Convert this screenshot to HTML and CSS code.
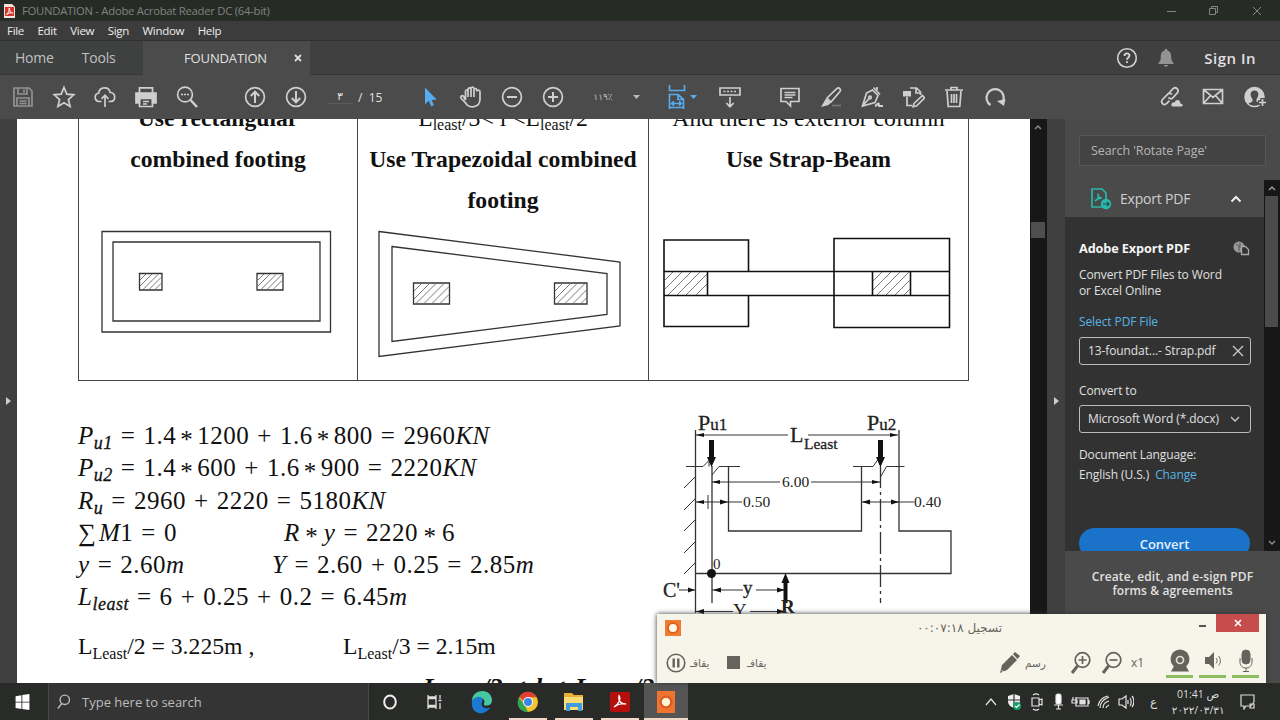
FILE: index.html
```
<!DOCTYPE html>
<html lang="en">

<head>
    <meta charset="UTF-8">
    <meta name="viewport" content="width=device-width, initial-scale=1.0">
    <title>FOUNDATION - Adobe Acrobat Reader DC (64-bit)</title>
    <link rel="stylesheet" href="styles.css">
</head>

<body>
    <header class="titlebar">
        <svg class="app-icon" width="11" height="14" viewBox="0 0 11 14"><path d="M0 0h8l3 3v11H0z" fill="#f3e4e2"/><path d="M1 3h9v9H1z" fill="#d8332b"/><path d="M2.500 10.500C5 8 5.500 6 5.200 4c0 3 1.500 4.500 3.500 5C6.500 8.500 4.500 9 2.500 10.500z" fill="none" stroke="#fff"/></svg>
        <span class="title-text">FOUNDATION - Adobe Acrobat Reader DC (64-bit)</span>
        <svg class="win-buttons" width="100" height="20" viewBox="1164 0 100 20" fill="none" stroke="#858984"><path d="M1167 10.500h9M1209.500 7.500h6v6h-6zM1211.500 7.500v-2h6v6h-2M1253 6l8 8M1261 6l-8 8"/></svg>
    </header>

    <nav class="menubar">
        <span>File</span><span>Edit</span><span>View</span><span>Sign</span><span>Window</span><span>Help</span>
    </nav>

    <div class="tabs">
        <div class="tab-links"><span class="tab-home">Home</span><span>Tools</span></div>
        <div class="tab-active"><span>FOUNDATION</span><svg width="8" height="8" viewBox="0 0 8 8" stroke="#ddd" stroke-width="1.800"><path d="M1 1l6 6M7 1l-6 6"/></svg></div>
        <div class="tab-right">
            <svg width="22" height="22" viewBox="0 0 22 22" fill="none" stroke="#d2d2d2" stroke-width="1.600"><circle cx="11" cy="11" r="9.300"/><path d="M8.500 9c0-3.500 5-3.300 5-.4 0 1.800-2.500 2-2.500 4.200M11 14.300v1.800" stroke-width="1.900"/></svg>
            <svg width="18" height="20" viewBox="0 0 18 20" fill="#929292"><path d="M9 1c1 0 1.500.6 1.500 1.500C13.500 3.300 14.200 6 14.200 9c0 3 .8 4.500 2.300 6v1h-15v-1c1.500-1.500 2.300-3 2.300-6 0-3 .7-5.700 3.700-6.500C7.500 1.600 8 1 9 1zM6.800 17h4.400c-.4 2.200-4 2.200-4.400 0z"/></svg>
            <span class="sign-in">Sign In</span>
        </div>
    </div>

    <div class="toolbar">
        <div class="tools tools-file">
            <svg class="icon dim" viewBox="0 0 24 24"><path d="M3 3h15l3 3v15H3zM7 3v6h9V3M6 21v-8h12v8M13 4.500v3M8.500 16h7M8.500 18.500h7"/></svg>
            <svg class="icon" viewBox="0 0 24 24"><path d="M12 2.500l2.800 6.700 7 .6-5.400 4.700 1.700 7L12 17.700l-6.100 3.800 1.700-7L2.200 9.800l7-.6z"/></svg>
            <svg class="icon" viewBox="0 0 24 24"><path d="M8.500 16.500H6A4.300 4.300 0 0 1 5.700 8C6.500 1.700 15.800 1 17.200 7.500c5.800.2 6 8.800.3 9h-2M12 22V10.500M8.500 13.800l3.500-3.600 3.500 3.600"/></svg>
            <svg class="icon" viewBox="0 0 24 24"><path d="M5.500 8V2.800h13V8"/><path d="M2 8h20v10h-3.500v-5h-13v5H2z" fill="#cfcfcf"/><path d="M5.500 13.500h13v8h-13zM9 16.500h6M9 19h4"/></svg>
            <svg class="icon" viewBox="0 0 24 24"><circle cx="10" cy="9.500" r="7.400"/><path d="M15.500 15l6.500 7" stroke-width="2.500"/><path d="M6 9.500h2M9 9.500h2M12 9.500h2"/></svg>
        </div>
        <div class="tools tools-page">
            <svg class="icon" viewBox="0 0 24 24"><circle cx="12" cy="12" r="9.400"/><path d="M12 18V7M7.800 11L12 6.700l4.200 4.300" stroke-width="2"/></svg>
            <svg class="icon" viewBox="0 0 24 24"><circle cx="12" cy="12" r="9.400"/><path d="M12 6v11M7.800 13l4.200 4.300 4.200-4.300" stroke-width="2"/></svg>
        </div>
        <span class="page-current">٣</span>
        <span class="page-total">/&nbsp; 15</span>
        <div class="tools tools-view">
            <svg class="icon" viewBox="0 0 24 24"><path d="M7 2.500v16.800l3.800-3.600 2.300 5.600 2.800-1.100-2.300-5.500h5.200z" fill="#55acee" stroke="none"/></svg>
            <svg class="icon" viewBox="0 0 24 24"><path d="M6.500 15V6.500c0-2 2.500-2 2.500 0V12 4.500c0-2.300 3-2.300 3 0V12 3.700c0-2.200 3-2.200 3 0V12 5c0-2 2.700-2 2.700 0v1.500c0-1.800 3.300-1.800 3.300.3V14c0 9.500-11.500 9.500-14 4.500L2 13c-1-2 1.200-3 2.600-1.700z"/></svg>
            <svg class="icon" viewBox="0 0 24 24"><circle cx="12" cy="12" r="9.400"/><path d="M7 12h10" stroke-width="2"/></svg>
            <svg class="icon" viewBox="0 0 24 24"><circle cx="12" cy="12" r="9.400"/><path d="M7 12h10M12 7v10" stroke-width="2"/></svg>
        </div>
        <span class="zoom-value">١١٩٪</span>
        <svg class="caret" viewBox="0 0 7 4"><path d="M0 0h7L3.500 4z" fill="#bbb"/></svg>
        <svg class="icon fit-icon" viewBox="0 0 24 24"><path d="M4.500 0v5.500h15V0M4.500 24V9.500H13l5.500 5V24M13 9.500v5h5.500M4.500 22.500h14M7 18.500h9M9 16.300l-2.300 2.200L9 20.700M14 16.300l2.300 2.200-2.300 2.200" stroke="#55acee"/></svg>
        <svg class="caret caret-blue" viewBox="0 0 7 4"><path d="M0 0h7L3.500 4z" fill="#55acee"/></svg>
        <svg class="icon ruler-icon" viewBox="0 0 24 24"><path d="M2 3h20v7H2zM5.500 6.500h2M9 6.500h2M12.500 6.500h2M16 6.500h2M12 12v9.500M8.300 18l3.700 3.700 3.700-3.700"/></svg>
        <div class="tools tools-edit">
            <svg class="icon" viewBox="0 0 24 24"><path d="M3 3.500h18v13h-8.500V21l-4.500-4.500H3zM6.500 7.500h11M6.500 10h11M6.500 12.500h8"/></svg>
            <svg class="icon" viewBox="0 0 24 24"><path d="M8 13L18 3.500c2-1.500 4.500.8 3 3L12 17z"/><path d="M7 13.500l5 4-2.500 2.500L2 22z" fill="#cfcfcf" stroke="none"/><path d="M13 20.500h9" stroke="#777"/></svg>
            <svg class="icon" viewBox="0 0 24 24"><path d="M13.500 2.500l6.500 7M12.500 5l-6 3L2.500 21 15 17.500l3-7zM2.500 21l7-8M17 2v3"/><circle cx="10" cy="12.500" r="1.300"/><path d="M15 21c1.500-.5 2-2.500 3.500-2.500L19 21h4" stroke-width="2.200"/></svg>
            <svg class="icon" viewBox="0 0 24 24"><path d="M9 3h6.500l4 4v3M15 3v5h4M6 12v8.500h5M13 18.500l8.500-8 2 2.500-8 8-3.500.6z"/><path d="M2 6h8v5.500H2z" fill="#cfcfcf" stroke="none"/></svg>
            <svg class="icon" viewBox="0 0 24 24"><path d="M3 5h18M9 5V2.500h6V5M5 6l1.200 15.500h11.600L19 6M9.500 9v9M12 9v9M14.500 9v9"/></svg>
            <svg class="icon" viewBox="0 0 24 24"><path d="M7.500 20A8.600 8.600 0 1 1 20.300 15.500" stroke-width="2.200"/><path d="M14 16l8.500-2-1.500 7z" fill="#cfcfcf" stroke="none"/></svg>
        </div>
        <div class="tools tools-share">
            <svg class="icon" viewBox="0 0 24 24"><path d="M10 8l4-4.300c3-2.500 6.500 1 4.500 4l-4.700 5.100c-1.500 1.500-3.500 1-4.300-.4M13 9.500c-1.500-1.700-3.500-1.200-4.500-.2l-5 5.200c-2.500 3 1.300 6.500 4 4.200l3-3"/><path d="M13 21.500c-2-3 1-5 2.800-4 1-4 6-2.500 5.500 1 3 0 3 3 .7 3z" fill="#cfcfcf" stroke="none"/></svg>
            <svg class="icon" viewBox="0 0 24 24"><path d="M2.500 4.500h19v14h-19zM2.500 4.500l9.500 8 9.500-8M2.500 18.500l7-8M21.500 18.500l-7-8"/></svg>
            <svg class="icon" viewBox="0 0 24 24"><circle cx="11.500" cy="12" r="9.400" fill="#cfcfcf"/><path d="M11.500 5.500c5 0 4.500 6 2 8.500v2.500l4 2c-3 3-9 3-12 0l4-2V14c-2.500-2.500-3-8.500 2-8.500z" fill="#4a4a4a" stroke="none"/><path d="M19.500 13v9M15 17.500h9" stroke="#4a4a4a" stroke-width="4.500"/><path d="M19.500 14v7M16 17.500h7"/></svg>
        </div>
    </div>

    <main class="workspace">
        <aside class="left-rail"><span class="arrow-right"></span></aside>

        <article class="page">
            <div class="footing-table">
                <section class="cell">
                    <h3>Use rectangular<br>combined footing</h3>
                    <svg width="279" height="160" viewBox="79 220 279 160" class="drawing">
                        <path d="M102 231.500h228.500v100.500H102zM113 242h207v79H113z"/>
                        <path d="M139.500 273.500h22.500v16.500h-22.500zM257 273.500h26v16.500h-26z"/>
                        <path class="hatch" d="M140 280l6-6M140 286l12-12M143 289.500l15-15M149 289.500l12-12M155 289.500l6-6M258 280l6-6M258 286l12-12M261 289.500l15-15M267 289.500l15-15M273 289.500l9-9"/>
                    </svg>
                </section>
                <section class="cell">
                    <h3><span class="plain">L<sub>least</sub>/3&lt; l &lt;L<sub>least</sub>/2</span><br>Use Trapezoidal combined<br>footing</h3>
                    <svg width="289" height="160" viewBox="358 220 289 160" class="drawing">
                        <path d="M379 231.500L620 262v64L379 356.500zM392 246.500L607 273.500v41L392 341.500z"/>
                        <path d="M413.500 283h36v21h-36zM554.500 283h32.500v21h-32.500z"/>
                        <path class="hatch" d="M414 291l7-7M414 299l15-15M416 303.500l20-20M424 303.500l20-20M432 303.500l17-17M440 303.500l9-9M555 291l7-7M555 299l15-15M557 303.500l20-20M565 303.500l20-20M573 303.500l14-14M581 303.500l6-6"/>
                    </svg>
                </section>
                <section class="cell">
                    <h3><span class="plain">And there is exterior column</span><br>Use Strap-Beam</h3>
                    <svg width="319" height="160" viewBox="649 220 319 160" class="drawing heavy">
                        <path d="M748.500 271.500v-31.500H664v86.500h84.500v-30.500M664 271.500h285.500M664 295.500h285.500M834 238.500h115.500v89H834zM707.500 271.500v24M872.500 271.500v24M910.500 271.500v24"/>
                        <path class="hatch" d="M665 280l8-8M665 289l17-17M668 295l23-23M677 295l23-23M686 295l21-21M696 295l11-11M873 281l9-9M873 290l18-18M877 295l23-23M886 295l23-23M895 295l15-15M904 295l6-6"/>
                    </svg>
                </section>
            </div>

            <div class="solution">
                <div class="equations">
                    <p><i>P<sub>u1</sub></i> = 1.4<b class="op">*</b>1200 + 1.6<b class="op">*</b>800 = 2960<i>KN</i></p>
                    <p><i>P<sub>u2</sub></i> = 1.4<b class="op">*</b>600 + 1.6<b class="op">*</b>900 = 2220<i>KN</i></p>
                    <p><i>R<sub>u</sub></i> = 2960 + 2220 = 5180<i>KN</i></p>
                    <p class="pair moment"><span>∑<i>&#8202;M</i>1 = 0</span><span><i>R</i><b class="op">*</b><i>y</i> = 2220<b class="op">*</b>6</span></p>
                    <p class="pair arm"><span><i>y</i> = 2.60<i>m</i></span><span><i>Y</i> = 2.60 + 0.25 = 2.85<i>m</i></span></p>
                    <p><i>L<sub>least</sub></i> = 6 + 0.25 + 0.2 = 6.45<i>m</i></p>
                    <p class="pair least"><span>L<sub>Least</sub>/2 = 3.225m ,</span><span>L<sub>Least</sub>/3 = 2.15m</span></p>
                    <p class="range">L<sub>Least</sub>/3 &lt; l &lt; L<sub>Least</sub>/2</p>
                </div>

                <svg class="drawing beam" width="330" height="290" viewBox="650 400 330 290">
                    <path d="M695.500 430v183M712 466v137M728.500 466v65H861.500V466M899 430v101h52v42.500H695.500"/>
                    <path class="thin" d="M686 466.500h17l6-6v6M712 475l7-8.500h21M853 466.500h20l5-7 2 6M880.500 477l6-10.500h18M695 477l-11 11M695 499l-11 11M695 520l-11 11M695 542l-11 11M695 563l-11 11M708 495v14"/>
                    <path class="thin" d="M696 435h92M808 435h90M712 482h68M811 482h69M696 502h46M861 502h53M679 590h16M712 590h31M756 590h30M696 611.500h37M750 611.500h35"/>
                    <path d="M880.500 466v137" stroke-dasharray="22 4 3 4"/>
                    <path class="solid" d="M696 435l8-2v4zM898 435l-8-2v4zM712 482l8-2v4zM880 482l-8-2v4zM728 502l-8-2.500v5zM696 502l8-2v4zM862 502l8-2.500v5zM899 502l-8-2.500v5zM695 590l-7-2.500v5zM713 590l8-2.500v5zM785 590l-8-2.500v5zM696 611.500l8-2.500v5zM785 611.500l-8-2.500v5z"/>
                    <path class="solid" d="M709 440h5v17h2l-4.500 10-4.500-10h2zM878 440h5v17h2l-4.500 10-4.500-10h2zM783.500 603v-20h-2l4-10 4 10h-2v20z"/>
                    <circle class="solid" cx="711.500" cy="573.500" r="4.500"/>
                    <text class="load" x="698" y="430" font-size="22">P<tspan font-size="17">u1</tspan></text>
                    <text class="load" x="867" y="430" font-size="22">P<tspan font-size="17">u2</tspan></text>
                    <text class="load" x="790" y="442" font-size="22">L</text>
                    <text class="load" x="804" y="448.500" font-size="15.500">Least</text>
                    <text x="782" y="487" font-size="15.500">6.00</text>
                    <text x="743" y="507" font-size="15.500">0.50</text>
                    <text x="914" y="507" font-size="15.500">0.40</text>
                    <text x="713" y="569" font-size="15">0</text>
                    <text class="load" x="663" y="597" font-size="20">C'</text>
                    <text class="load" x="743" y="594" font-size="19">y</text>
                    <text x="733" y="617" font-size="19">Y</text>
                    <text x="781" y="613" font-size="19" font-weight="bold">R</text>
                </svg>
            </div>
        </article>

        <div class="scroll-track">
            <svg width="16" height="16" viewBox="0 0 16 16" fill="none" stroke="#888" stroke-width="1.500"><path d="M5 10l3-3 3 3"/></svg>
            <div class="thumb"></div>
        </div>
        <div class="right-rail"><span class="arrow-right"></span></div>

        <aside class="panel">
            <div class="search">Search 'Rotate Page'</div>
            <div class="panel-body">
                <div class="panel-main">
                    <div class="export-head">
                        <svg width="24" height="24" viewBox="0 0 24 24" fill="none" stroke="#27b8ab" stroke-width="1.700"><path d="M14 20H3V2h10l4 4v6M6 14c3-2 4-5 3-7 0 3 2 4 4 4-3 0-5 1-7 3z"/><circle cx="17" cy="17" r="5.200" fill="#27b8ab" stroke="none"/><path d="M14 17h6M18 15l2 2-2 2" stroke="#254b49" stroke-width="1.200"/></svg>
                        <span>Export PDF</span>
                        <svg width="12" height="8" viewBox="0 0 12 8" fill="none" stroke="#eee" stroke-width="2"><path d="M1.500 6.500L6 2l4.500 4.500"/></svg>
                    </div>
                    <div class="export-form">
                        <div class="form-title"><b>Adobe Export PDF</b>
                            <svg width="17" height="15" viewBox="0 0 17 15"><circle cx="6" cy="6" r="5.500" fill="#999"/><path d="M3 3l3 2v5M7 2v5" stroke="#555" fill="none"/><path d="M8.500 5.500h4l3 3v5h-7z" fill="#333" stroke="#aaa" stroke-width="1.300"/></svg>
                        </div>
                        <p>Convert PDF Files to Word<br>or Excel Online</p>
                        <a class="select-file">Select PDF File</a>
                        <div class="field file"><span>13-foundat...- Strap.pdf</span><svg width="12" height="12" viewBox="0 0 12 12" stroke="#ccc" stroke-width="1.300"><path d="M1 1l10 10M11 1L1 11"/></svg></div>
                        <label>Convert to</label>
                        <div class="field format"><span>Microsoft Word (*.docx)</span><svg width="10" height="7" viewBox="0 0 10 7" fill="none" stroke="#ccc" stroke-width="1.300"><path d="M1 1l4 4 4-4"/></svg></div>
                        <p class="language">Document Language:<br>English (U.S.) &nbsp;<a>Change</a></p>
                        <button class="convert">Convert</button>
                    </div>
                </div>
                <div class="panel-scroll">
                    <svg width="16" height="16" viewBox="0 0 16 16" fill="none" stroke="#999" stroke-width="1.500"><path d="M5 10l3-3 3 3"/></svg>
                    <div class="panel-thumb"></div>
                    <svg width="16" height="16" viewBox="0 0 16 16" fill="none" stroke="#888" stroke-width="1.500"><path d="M5 6l3 3 3-3"/></svg>
                </div>
            </div>
            <div class="panel-foot">Create, edit, and e-sign PDF<br>forms &amp; agreements</div>
        </aside>
    </main>

    <!-- screen recorder floats above the reader -->
    <section class="recorder">
        <div class="rec-head">
            <svg width="16" height="16" viewBox="0 0 16 16"><path d="M0 0h16v16H0z" fill="#ee7d34"/><circle cx="8" cy="8" r="6" fill="#e35d1c"/><circle cx="8" cy="8" r="4" fill="#fff8e8"/></svg>
            <span class="rec-title" dir="rtl">تسجيل ٠٠:٠٧:١٨</span>
            <span class="rec-min"></span>
            <span class="rec-close"><svg width="8" height="8" viewBox="0 0 8 8" stroke="#fff" stroke-width="1.600"><path d="M1 1l6 6M7 1L1 7"/></svg></span>
        </div>
        <div class="rec-tools">
            <svg width="20" height="20" viewBox="0 0 20 20" fill="none" stroke="#66635d"><circle cx="10" cy="10" r="8.800" stroke-width="1.600"/><path d="M7.700 5.500v9M12.300 5.500v9" stroke-width="2.400"/></svg>
            <span class="rec-label pause">يقافـ</span>
            <span class="stop"></span>
            <span class="rec-label">يقافـ</span>
            <svg class="pencil" width="22" height="22" viewBox="0 0 22 22" fill="#66635d"><path d="M1 21l2-8L13 3l5 5L8 18zM14 2l2-2 5 4-2.500 3z"/><path d="M2.500 18.500l2.500 1.500" stroke="#f7f3e9"/></svg>
            <span class="rec-label draw">رسم</span>
            <svg class="zoom-in" width="21" height="24" viewBox="0 0 21 24" fill="none" stroke="#66635d" stroke-width="1.700"><circle cx="12.500" cy="9" r="7.300"/><path d="M7.500 15L2 22" stroke-width="3"/><path d="M8.500 9h8M12.500 5v8"/></svg>
            <svg class="zoom-out" width="21" height="24" viewBox="0 0 21 24" fill="none" stroke="#66635d" stroke-width="1.700"><circle cx="12.500" cy="9" r="7.300"/><path d="M7.500 15L2 22" stroke-width="3"/><path d="M8.500 9h8"/></svg>
            <span class="factor">x1</span>
            <div class="devices">
                <span><svg width="22" height="24" viewBox="0 0 22 24" fill="#66635d"><circle cx="11" cy="10" r="9.500"/><path d="M5 17h12l3 5.500H2z"/><circle cx="11" cy="11" r="3.500" fill="none" stroke="#e5e0d5" stroke-width="1.700"/></svg></span>
                <span><svg width="22" height="24" viewBox="0 0 22 24" fill="#66635d"><path d="M3 8h4l5-5v17l-5-5H3z"/><path d="M14 9c1.500 1.500 1.500 4 0 5.500M16.500 7c2.500 2.500 2.500 7 0 9.500" fill="none" stroke="#66635d"/></svg></span>
                <span><svg width="22" height="24" viewBox="0 0 22 24" fill="none" stroke="#66635d"><rect x="7" y="1" width="8" height="14" rx="4" fill="#66635d"/><path d="M5 9v4c0 8 12 8 12 0V9M11 19v4M8 22.500h6"/></svg></span>
            </div>
        </div>
    </section>

    <footer class="taskbar">
        <svg class="start" width="15" height="16" viewBox="0 0 13 15" fill="#fff"><path d="M0 2l5.500-.8v6H0zM6.300 1L13 0v7.200H6.300zM0 8h5.500v6L0 13.200zM6.300 8H13v7l-6.700-1z"/></svg>
        <div class="task-search">
            <svg width="13" height="16" viewBox="0 0 13 16" fill="none" stroke="#bbb" stroke-width="1.400"><circle cx="7.800" cy="5.800" r="4.700"/><path d="M4.800 9.500L.8 14.500"/></svg>
            <span>Type here to search</span>
        </div>
        <div class="apps">
            <span><svg width="24" height="24" viewBox="0 0 24 24" fill="none" stroke="#eee" stroke-width="2"><ellipse cx="12" cy="12" rx="5.800" ry="6.500"/></svg></span>
            <span><svg width="24" height="24" viewBox="0 0 24 24" fill="none" stroke="#ddd" stroke-width="1.300"><path d="M4 8.500h8v7H4zM4 5v2h8V5M4 19v-2h8v2M16 5v4M16 13v6M14.500 10.500h3"/></svg></span>
            <span><svg width="24" height="24" viewBox="0 0 24 24"><path d="M2 11C2 3 10-1 17 2c6 3 7 12 1 13.500-4 .5-5-1-3.500-3.500C15 8 7 5 2 11z" fill="#45c8a0"/><path d="M2 11c5-7 12-4 10.500 0-3 5 2 9 8 6.500C13 28 0 23 2 11z" fill="#1b79d1"/></svg></span>
            <span class="open"><svg width="24" height="24" viewBox="0 0 24 24"><circle cx="12" cy="12" r="10" fill="#f4c430"/><path d="M3 7.500l5.500 7L12 22C3 22-.5 14 3 7.500z" fill="#36a351"/><path d="M3.500 7C7 0 17 0 20.500 7.300H12l-4.500 4z" fill="#e23e31"/><circle cx="12" cy="12" r="5" fill="#fff"/><circle cx="12" cy="12" r="4" fill="#3d84ea"/></svg></span>
            <span class="open"><svg width="24" height="24" viewBox="0 0 24 24"><path d="M2 3h8l2 2h9v15H2z" fill="#e8ae35"/><path d="M2 7h19v13H2z" fill="#fbdb76"/><path d="M4 13h16v8h-4v-4H8v4H4z" fill="#3f9ddb"/></svg></span>
            <span class="open"><svg width="24" height="24" viewBox="0 0 24 24"><rect x="2" y="2" width="20" height="20" rx="2" fill="#b40f0b"/><path d="M6 17c5-3 7-8 5-11-1 6 3 8 7 8-4-1-8 0-12 3z" fill="none" stroke="#fff" stroke-width="1.400"/></svg></span>
            <span class="open current"><svg width="24" height="24" viewBox="0 0 24 24"><path d="M3 1h18v22H3z" fill="#ee7430"/><circle cx="12" cy="12" r="6.500" fill="#db5a20"/><circle cx="12" cy="12" r="4.200" fill="#fff3d8"/></svg></span>
        </div>
        <svg class="tray" width="150" height="24" viewBox="984 690 150 24" fill="none" stroke="#e4e4e4" stroke-width="1.200">
            <path d="M986 705l5-6 5 6"/>
            <path d="M1014 694l6 2v5c0 4-3 6-6 7-3-1-6-3-6-7v-5z" fill="#eee" stroke="none"/><path d="M1014 694v14M1008 700h12" stroke="#333"/><circle cx="1017" cy="706" r="4" fill="#159c6c" stroke="none"/><path d="M1015 706l1.500 1.500 3-3" stroke="#fff"/>
            <path d="M1032 698h7v8h-7zM1039 700l3-1v6l-3-1M1033 695c2-1.500 4-1.500 6 0M1033 709c2 1.500 4 1.500 6 0"/>
            <rect x="1056" y="694" width="5" height="10" rx="2" fill="#fff"/><path d="M1054 705h9M1058.500 705v4M1056 709h5"/>
            <path d="M1076 698h12v8h-12zM1089 700v4M1073 697v3M1076 697v3M1072 700h5v3h-5z"/><path d="M1080 700h5v4h-5z" fill="#ddd"/>
            <path d="M1100 708c0-5 4-9 9-11M1103 708c0-3 2-6 6-7M1106 708c0-1 1-2 3-3M1098 706c1-5 5-9 10-10"/>
            <path d="M1119 699h3l4-3v12l-4-3h-3zM1128 700v4M1130 698c1.500 2 1.500 6 0 8M1132 696c2.500 3 2.500 8 0 11"/>
        </svg>
        <span class="lang">ع</span>
        <div class="clock"><span dir="rtl">ص 01:41</span><span>٢٠٢٢/٠٣/٣١</span></div>
        <svg class="notice" width="16" height="16" viewBox="0 0 16 16" fill="none" stroke="#ddd" stroke-width="1.200"><path d="M9 12H6l-2 3v-3H1V1h13v7M14 8l-4 5M10 10h4v4h-4z"/></svg>
    </footer>
</body>

</html>
```

FILE: styles.css
```
/* Reset and Base Styling */
* {
    margin: 0;
    padding: 0;
    box-sizing: border-box;
}

body {
    width: 1280px;
    height: 720px;
    overflow: hidden;
    position: relative;
    display: flex;
    flex-direction: column;
    font-family: "Open Sans", "DejaVu Sans", sans-serif;
    background: #404040;
    color: #e0e0e0;
}

svg {
    display: block;
    flex: none;
}

span {
    white-space: nowrap;
}

/* Title and menu */
.titlebar {
    height: 21px;
    background: #272b26;
    display: flex;
    align-items: center;
    padding: 0 16px 0 4px;
    font-size: 11.3px;
    letter-spacing: -0.27px;
    color: #80837f;
}

.title-text {
    margin-left: 7px;
}

.win-buttons {
    margin-left: auto;
}

.menubar {
    height: 20px;
    background: #3c3c3c;
    border-bottom: 1px solid #303030;
    display: flex;
    align-items: center;
    gap: 13.5px;
    padding-left: 7px;
    font-size: 11.5px;
    letter-spacing: -0.3px;
    color: #ededed;
}

/* Tabs */
.tabs {
    height: 34px;
    display: flex;
    background: #404040;
    font-size: 14px;
}

.tab-links {
    width: 143px;
    padding-left: 15px;
    display: flex;
    align-items: center;
    gap: 28px;
    background: #3e4140;
    border-bottom: 1px solid #373737;
    letter-spacing: -0.2px;
    color: #c0c0c0;
}

.tab-active {
    width: 167px;
    background: #4b4b4b;
    display: flex;
    align-items: center;
    justify-content: flex-end;
    gap: 27px;
    padding-right: 8px;
    font-size: 13px;
    letter-spacing: -0.15px;
}

.tab-right {
    flex: 1;
    display: flex;
    align-items: center;
    justify-content: flex-end;
    padding-right: 24px;
    border-bottom: 1px solid #363636;
}

.tab-right svg + svg {
    margin-left: 19px;
}

.sign-in {
    margin-left: 29px;
    font-size: 15px;
    font-weight: 600;
    letter-spacing: 0.5px;
}

/* Toolbar */
.toolbar {
    height: 44px;
    background: #4b4b4b;
    display: flex;
    align-items: center;
    padding: 0 13px 0 11px;
}

.tools {
    display: flex;
    gap: 17px;
}

.icon {
    width: 24px;
    height: 24px;
    fill: none;
    stroke: #cfcfcf;
    stroke-width: 1.7;
}

.dim {
    stroke: #929292;
}

.tools-page {
    margin-left: 44px;
}

.page-current {
    width: 26px;
    margin-left: 19px;
    text-align: center;
    font: 11px "DejaVu Sans", sans-serif;
    border-bottom: 1px solid #5d5d5d;
}

.page-total {
    width: 30px;
    margin-left: 5px;
    font-size: 12px;
}

.tools-view {
    margin-left: 30px;
}

.zoom-value {
    width: 34px;
    margin-left: 21px;
    font: 9px "DejaVu Sans", sans-serif;
    letter-spacing: -0.4px;
    color: #bbb;
    text-align: center;
}

.caret {
    width: 7px;
    height: 4px;
    margin-left: 13px;
}

.fit-icon {
    margin-left: 25px;
}

.caret-blue {
    margin-left: 1px;
}

.ruler-icon {
    margin-left: 21px;
}

.tools-edit {
    margin-left: 36px;
}

.tools-share {
    margin-left: auto;
    gap: 18px;
}

/* Workspace */
.workspace {
    height: 564px;
    display: flex;
}

.left-rail,
.right-rail {
    width: 17px;
    background: #404040;
    display: flex;
    align-items: center;
    justify-content: center;
}

.right-rail {
    width: 18px;
}

.arrow-right {
    border: 4px solid transparent;
    border-left: 5px solid #ccc;
    border-right: 0;
}

.page {
    width: 1013px;
    padding-left: 61px;
    background: #fff;
    color: #111;
    overflow: hidden;
    font-family: "Liberation Serif", serif;
}

.footing-table {
    width: 891px;
    height: 284px;
    margin-top: -22px;
    display: grid;
    grid-template-columns: 278px 291px 320px;
    border: 1px solid #444;
}

.cell + .cell {
    border-left: 1px solid #444;
}

.cell h3 {
    height: 122px;
    font-size: 23.7px;
    line-height: 41px;
    text-align: center;
    white-space: nowrap;
}

.cell sub {
    font-size: 16px;
    line-height: 0;
    vertical-align: -4px;
}

.plain {
    font-weight: normal;
}

.drawing {
    fill: none;
    stroke: #333;
    stroke-width: 1.3;
}

.heavy {
    stroke: #111;
    stroke-width: 1.6;
}

.drawing .hatch {
    stroke: #555;
    stroke-width: 0.8;
}

.drawing .thin {
    stroke-width: 1;
}

.drawing .solid {
    fill: #111;
    stroke: none;
}

.drawing text {
    fill: #222;
    stroke: none;
}

.drawing .load {
    stroke: #222;
    stroke-width: 0.3;
}

.solution {
    display: flex;
    padding-top: 39px;
}

.equations {
    width: 572px;
    font-size: 25px;
    letter-spacing: 0.5px;
    word-spacing: 1.3px;
    line-height: 32.3px;
    white-space: nowrap;
}

.equations sub {
    font-size: 18px;
    line-height: 0;
    vertical-align: -5px;
}

.equations i sub {
    -webkit-text-stroke: 0.3px #111;
}

.op {
    margin: 0 4px;
    font-weight: normal;
    line-height: 0;
    vertical-align: -4px;
}

.pair {
    display: grid;
}

.moment {
    grid-template-columns: 206px auto;
}

.moment .op {
    margin: 0 5.5px;
}

.arm {
    grid-template-columns: 194px auto;
}

.equations .least {
    grid-template-columns: 265px auto;
    margin-top: 16px;
    font-size: 23.7px;
    letter-spacing: 0;
    word-spacing: 0;
}

.equations .least sub {
    font-size: 16px;
}

.range {
    margin: 10px 0 0 345px;
    font-size: 26px;
    font-weight: bold;
    font-style: italic;
}

.beam {
    margin-top: -20px;
}

/* Scrollbars */
.scroll-track {
    width: 17px;
    background: #171717;
}

.thumb {
    width: 14px;
    height: 16px;
    margin: 87px 0 0 1px;
    background: #4e4e4e;
}

/* Export panel */
.panel {
    width: 215px;
    background: #4a4a4a;
    font-size: 12px;
}

.search {
    width: 187px;
    height: 31px;
    margin: 16px 0 14px 14px;
    padding-left: 11px;
    border: 1px solid #565656;
    background: #434343;
    line-height: 29px;
    font-size: 12.5px;
    letter-spacing: -0.1px;
    color: #b5b5b5;
}

.panel-body {
    height: 371px;
    display: flex;
    overflow: hidden;
}

.panel-main {
    width: 199px;
}

.export-head {
    height: 37px;
    display: flex;
    align-items: center;
    padding-left: 24px;
    font-size: 14px;
}

.export-head span {
    margin-left: 7px;
    width: 110px;
    letter-spacing: -0.2px;
    color: #cfcfcf;
}

.export-form {
    height: 334px;
    padding: 22px 14px 0;
    background: #323232;
    line-height: 16px;
    overflow: hidden;
    letter-spacing: -0.1px;
}

.form-title {
    height: 18px;
    display: flex;
    justify-content: space-between;
    align-items: center;
    color: #f4f4f4;
    font-size: 12.7px;
}

.export-form p {
    margin-top: 10px;
    white-space: nowrap;
}

.export-form a {
    color: #58b4e5;
}

.select-file {
    display: block;
    margin-top: 15px;
}

.field {
    width: 172px;
    height: 28px;
    border: 1px solid #bbb;
    border-radius: 3px;
    display: flex;
    align-items: center;
    justify-content: space-between;
    padding: 0 6px 0 8px;
}

.file {
    margin: 7px 0 18px;
}

.format {
    margin-top: 6px;
    padding-right: 10px;
}

.export-form .language {
    margin-top: 12px;
    line-height: 20px;
}

.convert {
    width: 171px;
    height: 31px;
    margin-top: 43px;
    border: 0;
    border-radius: 16px;
    background: #1b73c9;
    color: #e3f1ff;
    font: 600 13px "Open Sans", sans-serif;
}

.panel-scroll {
    width: 16px;
    background: #171717;
    display: flex;
    flex-direction: column;
}

.panel-thumb {
    width: 13px;
    height: 131px;
    margin: 0 0 auto 1px;
    background: #4b4b4b;
}

.panel-foot {
    padding-top: 19px;
    text-align: center;
    font-weight: 600;
    line-height: 14px;
    letter-spacing: 0.1px;
}

/* Recorder */
.recorder {
    position: absolute;
    left: 657px;
    top: 614px;
    width: 609px;
    height: 69px;
    background: #f7f4e9;
    box-shadow: 0 0 5px #333;
    color: #66635d;
    font-family: "DejaVu Sans", sans-serif;
}

.rec-head {
    height: 28px;
    display: flex;
    align-items: center;
    padding-left: 8px;
}

.rec-title {
    width: 86px;
    margin-left: 235px;
    font-size: 12px;
}

.rec-min {
    width: 7px;
    height: 2px;
    margin-left: 197px;
    margin-top: -4px;
    background: #555;
}

.rec-close {
    width: 43px;
    height: 18px;
    margin-left: 10px;
    align-self: flex-start;
    display: flex;
    align-items: center;
    justify-content: center;
    background: #c74c4c;
}

.rec-tools {
    height: 41px;
    display: flex;
    align-items: center;
    padding-left: 9px;
}

.rec-label {
    width: 24px;
    margin-left: 4px;
    font-size: 10.5px;
}

.stop {
    width: 13px;
    height: 13px;
    margin: 0 3px 0 13px;
    background: #66635d;
}

.pencil {
    margin-left: 228px;
}

.zoom-in {
    margin-left: 21px;
}

.zoom-out {
    margin-left: 10px;
}

.factor {
    width: 20px;
    margin-left: 9px;
    font: 12px "Open Sans", sans-serif;
}

.devices {
    display: flex;
    gap: 6px;
    margin: 2px 0 0 15px;
}

.devices span {
    width: 27px;
    display: flex;
    justify-content: center;
    padding-bottom: 2px;
    border-bottom: 3px solid #8cbd61;
}

/* Taskbar */
.taskbar {
    height: 37px;
    background: #292b28;
    display: flex;
    align-items: center;
    color: #ddd;
}

.start {
    margin-left: 15px;
}

.task-search {
    width: 321px;
    height: 37px;
    margin-left: 18px;
    padding-left: 8px;
    display: flex;
    align-items: center;
    gap: 12px;
    background: #343434;
    border-right: 1px solid #484848;
    border-left: 1px solid #484848;
    font-size: 13px;
    color: #bdbdbd;
}

.apps {
    display: flex;
    gap: 2px;
    margin-left: -1px;
}

.apps span {
    width: 44px;
    height: 37px;
    display: flex;
    align-items: center;
    justify-content: center;
}

.apps .open {
    background: linear-gradient(#f1d8c6, #f1d8c6) bottom / 38px 2px no-repeat;
}

.apps .current {
    background: linear-gradient(#f1d8c6, #f1d8c6) bottom / 44px 2px no-repeat, #555;
}

.tray {
    margin-left: 296px;
}

.lang {
    margin-left: 16px;
    font: 12px "DejaVu Sans", sans-serif;
}

.clock {
    width: 58px;
    margin-left: 12px;
    display: flex;
    flex-direction: column;
    align-items: center;
    font: 10.5px/16px "Open Sans", "DejaVu Sans", sans-serif;
}

.notice {
    margin-left: 13px;
}
```
